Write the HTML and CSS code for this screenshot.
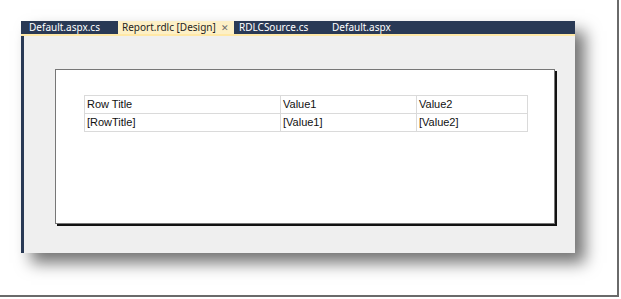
FILE: index.html
```html
<!DOCTYPE html>
<html lang="en">
<head>
  <meta charset="UTF-8" />
  <title>Report.rdlc [Design]</title>
  <link rel="stylesheet" href="styles.css">
</head>
<body>
  <div class="frame">
    <div class="window">
      <div class="tabs">
        <div class="tab first">Default.aspx.cs</div>
        <div class="tab active">Report.rdlc [Design]<span class="close">&#x2715;</span></div>
        <div class="tab third">RDLCSource.cs</div>
        <div class="tab">Default.aspx</div>
      </div>
      <div class="design">
        <div class="report">
          <table class="tablix">
            <tr>
              <td class="c1">Row Title</td>
              <td class="c2">Value1</td>
              <td class="c3">Value2</td>
            </tr>
            <tr>
              <td>[RowTitle]</td>
              <td>[Value1]</td>
              <td>[Value2]</td>
            </tr>
          </table>
        </div>
      </div>
    </div>
  </div>
</body>
</html>
```

FILE: styles.css
```css
body {
  margin: 0;
  background: #ffffff;
}
.frame {
  width: 596px;
  height: 274px;
  border-right: 2px solid #6a6a6a;
  border-bottom: 2px solid #6a6a6a;
  padding: 21px 0 0 21px;
  overflow: hidden;
}
.window {
  width: 554px;
  height: 232px;
  display: flex;
  flex-direction: column;
  box-shadow: 10px 10px 15px rgba(0, 0, 0, 0.55);
}
.tabs {
  display: flex;
  height: 13px;
  background: #293955;
  border-bottom: 2px solid #ffe8a6;
  font-family: "Noto Sans", sans-serif;
  font-size: 10px;
  line-height: 13px;
  color: #ffffff;
}
.tab {
  padding: 0 8px;
  white-space: nowrap;
}
.tab.first {
  width: 89px;
  padding: 0 0 0 8px;
}
.tab.active {
  width: 112px;
  background: #fdf0c6;
  color: #1e1e1e;
  padding: 0 0 0 4px;
}
.close {
  color: #6b6b6b;
  font-size: 9px;
  margin-left: 5px;
}
.tab.third {
  width: 85px;
  padding: 0 0 0 5px;
}
.design {
  flex: 1;
  background: #efefef;
  border-left: 3px solid #293955;
  padding: 33px 0 0 31px;
}
.report {
  width: 500px;
  height: 155px;
  box-sizing: border-box;
  background: #ffffff;
  border: 1px solid #777777;
  box-shadow: 2px 2px 0 #111111;
  padding: 25px 0 0 28px;
}
.tablix {
  border-collapse: collapse;
  font-family: "Liberation Sans", Arial, sans-serif;
  font-size: 11px;
  color: #111111;
}
.tablix td {
  border: 1px solid #dadada;
  height: 17px;
  padding: 0 2px;
  line-height: 17px;
}
.c1 { width: 191px; }
.c2 { width: 131px; }
.c3 { width: 106px; }
```
